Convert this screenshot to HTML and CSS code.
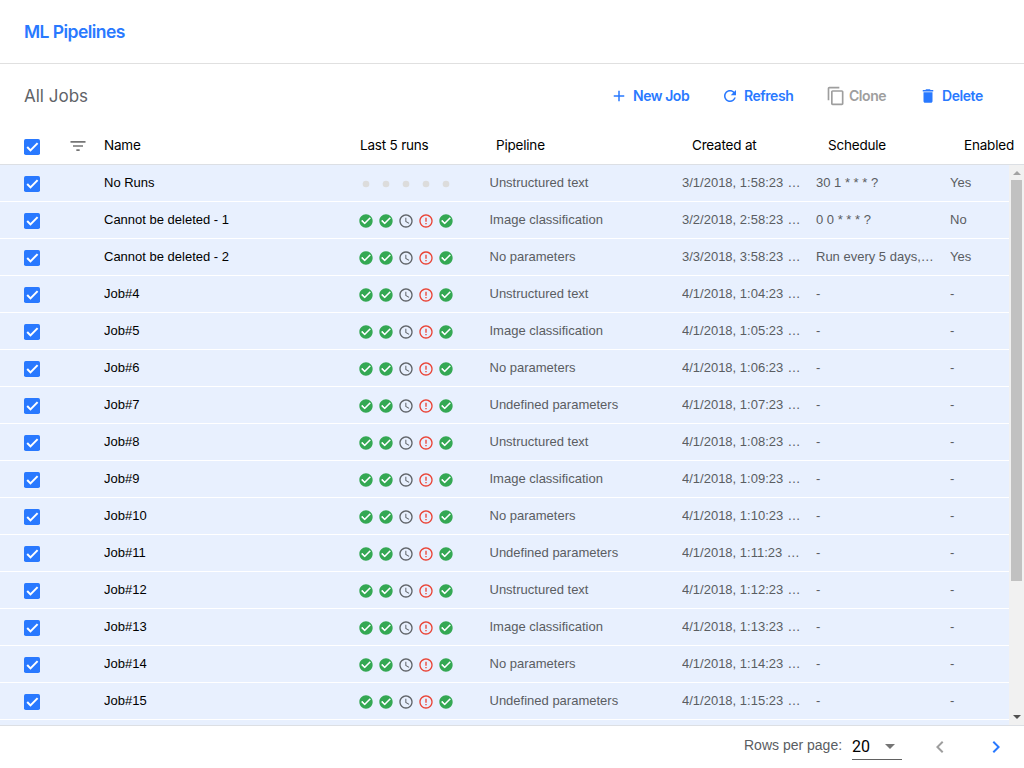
FILE: index.html
```html
<!DOCTYPE html>
<html lang="en">
<head>
<meta charset="utf-8">
<title>ML Pipelines</title>
<link rel="stylesheet" href="styles.css">
</head>
<body>
<svg class="sprite" aria-hidden="true">
  <symbol id="checkbox" viewBox="3 3 18 18"><rect x="3" y="3" width="18" height="18" rx="2" fill="#2979ff"/><path d="M6.6 12l3.7 3.8 8-8.2" fill="none" stroke="#fff" stroke-width="2.3"/></symbol>
  <symbol id="ok" viewBox="0 0 24 24"><path fill="#34a853" d="M12 2C6.48 2 2 6.48 2 12s4.48 10 10 10 10-4.48 10-10S17.52 2 12 2zm-2 15l-5-5 1.41-1.41L10 14.17l7.59-7.59L19 8l-9 9z"/><path fill="#fff" d="M10 17l-5-5 1.41-1.41L10 14.17l7.59-7.59L19 8z"/></symbol>
  <symbol id="clock" viewBox="0 0 24 24"><path fill="#5f6368" d="M11.99 2C6.47 2 2 6.48 2 12s4.47 10 9.99 10C17.52 22 22 17.52 22 12S17.52 2 11.99 2zM12 20c-4.42 0-8-3.58-8-8s3.58-8 8-8 8 3.58 8 8-3.58 8-8 8zm.5-13H11v6l5.25 3.15.75-1.23-4.5-2.67z"/></symbol>
  <symbol id="error" viewBox="0 0 24 24"><path fill="#ea4335" d="M11 15h2v2h-2zm0-8h2v6h-2zm.99-5C6.47 2 2 6.48 2 12s4.47 10 9.99 10C17.52 22 22 17.52 22 12S17.52 2 11.99 2zM12 20c-4.42 0-8-3.58-8-8s3.58-8 8-8 8 3.58 8 8-3.58 8-8 8z"/></symbol>
  <symbol id="none" viewBox="0 0 24 24"><circle cx="12" cy="12" r="5" fill="#dcdcdc"/></symbol>
</svg>
<header class="topbar"><span class="brand">ML Pipelines</span></header>
<div class="toolbar">
  <h1 class="page-title">All Jobs</h1>
  <div class="actions">
    <button class="action action-new"><svg viewBox="0 0 24 24"><path d="M19 13h-6v6h-2v-6H5v-2h6V5h2v6h6v2z"/></svg><span>New Job</span></button>
    <button class="action action-refresh"><svg viewBox="0 0 24 24"><path d="M17.65 6.35C16.2 4.9 14.21 4 12 4c-4.42 0-7.99 3.58-7.99 8s3.57 8 7.99 8c3.73 0 6.84-2.55 7.73-6h-2.08c-.82 2.33-3.04 4-5.65 4-3.31 0-6-2.69-6-6s2.69-6 6-6c1.66 0 3.14.69 4.22 1.78L13 11h7V4l-2.35 2.35z"/></svg><span>Refresh</span></button>
    <button class="action action-clone" disabled><svg viewBox="0 0 24 24"><path d="M16 1H4c-1.1 0-2 .9-2 2v14h2V3h12V1zm3 4H8c-1.1 0-2 .9-2 2v14c0 1.1.9 2 2 2h11c1.1 0 2-.9 2-2V7c0-1.1-.9-2-2-2zm0 16H8V7h11v14z"/></svg><span>Clone</span></button>
    <button class="action action-delete"><svg viewBox="0 0 24 24"><path d="M6 19c0 1.1.9 2 2 2h8c1.1 0 2-.9 2-2V7H6v12zM19 4h-3.5l-1-1h-5l-1 1H5v2h14V4z"/></svg><span>Delete</span></button>
  </div>
</div>
<div class="table-head">
  <svg class="checkbox"><use href="#checkbox"/></svg>
  <svg class="filter" viewBox="0 0 24 24"><path d="M10 18h4v-2h-4v2zM3 6v2h18V6H3zm3 7h12v-2H6v2z"/></svg>
  <span>Name</span><span>Last 5 runs</span><span>Pipeline</span><span>Created at</span><span>Schedule</span><span>Enabled</span>
</div>
<main class="table-body">
  <div class="rows" id="rows"></div>
  <div class="scrollbar"><span class="arrow arrow-up"></span><span class="thumb"></span><span class="arrow arrow-down"></span></div>
</main>
<footer class="footer">
  <span class="per-page">Rows per page:</span>
  <div class="select"><span>20</span><span class="caret"></span></div>
  <svg class="page prev" viewBox="0 0 24 24"><path d="M15.41 7.41L14 6l-6 6 6 6 1.41-1.41L10.83 12z"/></svg>
  <svg class="page next" viewBox="0 0 24 24"><path d="M10 6L8.59 7.41 13.17 12l-4.58 4.59L10 18l6-6z"/></svg>
</footer>
<script src="app.js"></script>
</body>
</html>
```
FILE: styles.css
```css
* { box-sizing: border-box; }
body { margin: 0; width: 1024px; height: 768px; overflow: hidden; display: flex; flex-direction: column; background: #fff; font: 13px/20px "Liberation Sans", Arial, sans-serif; color: #5a5d62; }
.sprite { display: none; }
svg { display: block; flex: none; fill: currentColor; }
.topbar { height: 64px; border-bottom: 1px solid #e0e0e0; padding: 0 24px; display: flex; align-items: center; }
.brand { font: 600 17.5px/24px Inter, sans-serif; color: #2979ff; letter-spacing: -0.55px; }
.toolbar { height: 64px; padding: 0 40px 0 24px; display: flex; align-items: center; justify-content: space-between; }
.page-title { margin: 0; font: 400 17px/24px Inter, sans-serif; color: #5f6368; }
.actions { display: flex; }
.action { border: 0; padding: 0; background: none; display: flex; align-items: center; font: 600 14px/20px Inter, sans-serif; letter-spacing: -0.45px; color: #2979ff; white-space: nowrap; }
.action svg { width: 18px; height: 18px; }
.action span { margin-left: 5px; }
.action-new { width: 111px; }
.action-refresh { width: 105px; }
.action-clone { width: 93px; color: #9e9e9e; }
.action-clone svg { width: 20px; height: 20px; }
.action-clone span { margin-left: 3px; }
.action-delete { width: 65px; }
.table-head { height: 37px; border-bottom: 1px solid #dcdfe4; padding-left: 24px; display: grid; grid-template-columns: 44px 36px 256px 136px 196px 136px 136px 60px; align-items: center; font: 400 13.5px/20px Inter, sans-serif; letter-spacing: -0.2px; color: #000; }
.table-head span { padding-bottom: 2px; }
.checkbox { width: 16px; height: 16px; }
.table-head .checkbox { margin-top: 2px; }
.filter { width: 20px; height: 20px; color: #757575; }
.table-body { height: 561px; display: flex; overflow: hidden; border-bottom: 1px solid #dcdfe4; }
.rows { width: 1009px; }
.row { height: 37px; padding-left: 24px; background: #e8f0fe; border-bottom: 1px solid #fff; display: grid; grid-template-columns: 80px 254px 131.5px 192.5px 134px 134px 59px; align-items: center; }
.row .checkbox { margin-top: 2px; }
.row .text { overflow: hidden; text-overflow: ellipsis; white-space: nowrap; margin-right: 14px; }
.row .name { color: #000; }
.meridiem { padding-left: 1.5px; }
.runs { display: flex; gap: 4px; margin-top: 2px; }
.runs svg { width: 16px; height: 16px; }
.scrollbar { width: 15px; background: #f1f1f1; padding: 6px 2px; display: flex; flex-direction: column; align-items: center; }
.arrow { border: 4px solid transparent; border-top-width: 0; }
.arrow-up { border-bottom-color: #a3a3a3; }
.thumb { margin-top: 5px; width: 11px; height: 401px; background: #c1c1c1; }
.arrow-down { margin-top: auto; border-width: 4px 4px 0; border-top-color: #505050; }
.footer { flex: 1; display: flex; padding-left: 744px; }
.per-page { width: 108px; font-size: 14px; line-height: 20px; margin-top: 9px; }
.select { width: 50px; height: 28px; margin-top: 6px; border-bottom: 1px solid #616161; font: 400 16px/30px Roboto, sans-serif; color: #000; display: flex; align-items: center; padding-top: 2px; }
.caret { border: 5px solid transparent; border-top-color: #757575; border-bottom: 0; margin-left: 15px; }
.page { width: 24px; height: 24px; margin-top: 9px; }
.prev { color: #9e9e9e; margin-left: 26px; }
.next { color: #2979ff; margin-left: 32px; }
```
FILE: app.js
```js
const pipelines = ['No parameters', 'Undefined parameters', 'Unstructured text', 'Image classification'];
const am = '<span class="meridiem"> AM</span>';
const jobs = [
  ['No Runs', 'Unstructured text', '3/1/2018, 1:58:23' + am, '30 1 * * * ?', 'Yes'],
  ['Cannot be deleted - 1', 'Image classification', '3/2/2018, 2:58:23' + am, '0 0 * * * ?', 'No'],
  ['Cannot be deleted - 2', 'No parameters', '3/3/2018, 3:58:23' + am, 'Run every 5 days, starting now', 'Yes']
];
for (let n = 4; n <= 15; n++) {
  const pipeline = n === 4 ? pipelines[2] : n === 5 ? pipelines[3] : pipelines[(n - 6) % 4];
  jobs.push(['Job#' + n, pipeline, `4/1/2018, 1:${String(n).padStart(2, '0')}:23${am}`, '-', '-']);
}
const icon = (id, cls = '') => `<svg class="${cls}"><use href="#${id}"/></svg>`;
document.getElementById('rows').innerHTML = jobs.map(([name, ...cells], i) => {
  const runs = i === 0 ? Array(5).fill('none') : ['ok', 'ok', 'clock', 'error', 'ok'];
  return `<div class="row">${icon('checkbox', 'checkbox')}<span class="text name">${name}</span><div class="runs">${runs.map(r => icon(r)).join('')}</div>${cells.map(c => `<span class="text">${c}</span>`).join('')}</div>`;
}).join('') + '<div class="row"></div>';
```
